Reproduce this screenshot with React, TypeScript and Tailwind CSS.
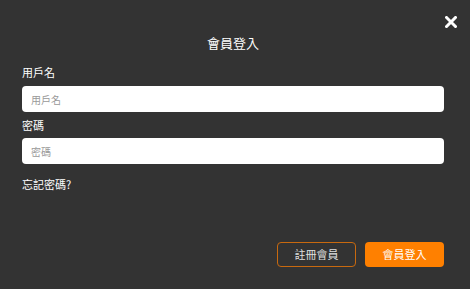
import { useState } from 'react';

export default function App() {
  const [username, setUsername] = useState('');
  const [password, setPassword] = useState('');

  return (
    <div
      className="h-[289px] w-full bg-[#333333] flex flex-col pl-[22px] pr-[26px] pb-[22px] text-white"
      style={{ fontFamily: '"Noto Sans CJK TC", "Noto Sans", sans-serif' }}
    >
      <div className="flex justify-end pt-[16px] -mr-[13px]">
        <button className="w-[12px] h-[12px] flex items-center justify-center">
          <svg viewBox="0 0 12 12" width="12" height="12">
            <path d="M1.5 1.5 L10.5 10.5 M10.5 1.5 L1.5 10.5" stroke="#ffffff" strokeWidth="3" strokeLinecap="square" />
          </svg>
        </button>
      </div>

      <h1 className="mt-[7px] text-center text-[13px] leading-[16px] text-white">會員登入</h1>

      <label className="mt-[13px] text-[11px] leading-[16px] text-white">用戶名</label>
      <input
        value={username}
        onChange={(e) => setUsername(e.target.value)}
        placeholder="用戶名"
        className="mt-[6px] h-[26px] w-full rounded-[4px] bg-white px-[9px] text-[10px] text-[#333] outline-none placeholder:text-[#999]"
      />

      <label className="mt-[5px] text-[11px] leading-[16px] text-white">密碼</label>
      <input
        type="password"
        value={password}
        onChange={(e) => setPassword(e.target.value)}
        placeholder="密碼"
        className="mt-[5px] h-[26px] w-full rounded-[4px] bg-white px-[9px] text-[10px] text-[#333] outline-none placeholder:text-[#999]"
      />

      <a className="mt-[12px] text-[11px] leading-[16px] text-white">忘記密碼?</a>

      <div className="mt-auto flex justify-end gap-[9px]">
        <button className="h-[25px] w-[79px] rounded-[4px] border border-[#c8690f] text-[11px] text-[#e0e0e0]">
          註冊會員
        </button>
        <button className="h-[25px] w-[79px] rounded-[4px] bg-[#ff8000] text-[11px] text-white">
          會員登入
        </button>
      </div>
    </div>
  );
}
